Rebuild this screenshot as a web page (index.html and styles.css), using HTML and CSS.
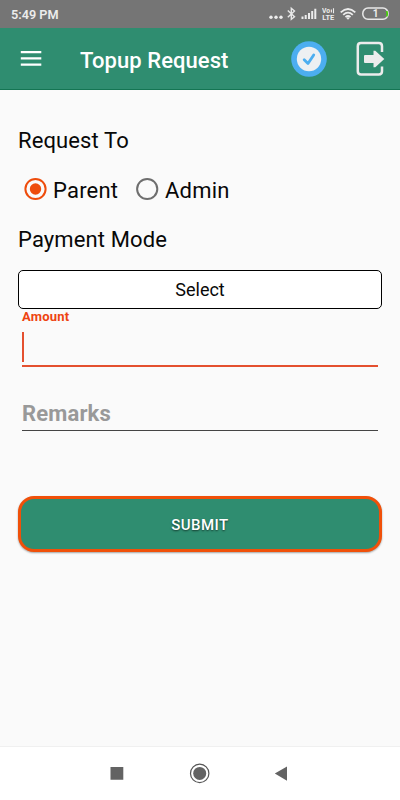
FILE: index.html
```html
<!DOCTYPE html>
<html lang="en">
<head>
<meta charset="utf-8">
<meta name="viewport" content="width=device-width, initial-scale=1">
<title>Topup Request</title>
<link rel="stylesheet" href="styles.css">
</head>
<body>
<div class="screen">
  <div class="status">
    <span class="time">5:49 PM</span>
    <svg class="dots" width="14" height="28" viewBox="0 0 14 28" fill="#ececec"><circle cx="2" cy="17.2" r="1.7"/><circle cx="7" cy="17.2" r="1.7"/><circle cx="12" cy="17.2" r="1.7"/></svg>
    <svg class="bt" width="9" height="28" viewBox="0 0 9 28" fill="none" stroke="#e8e8e8" stroke-width="1.4"><path d="M.8 10.5 7.5 16.8 4.3 19.4V8.2L7.5 11 .8 17.3"/></svg>
    <svg class="signal" width="16" height="28" viewBox="0 0 16 28" fill="#ececec"><path d="M.5 16.6h2V19H.5zM3.7 15h2v4h-2zM7 13h2v6H7zM10.2 11h2v8h-2zM13.3 8.8h2V19h-2z"/></svg>
    <svg class="volte" width="14" height="28" viewBox="0 0 14 28"><text x="0" y="13.2" textLength="8">Vo</text><path d="M9.4 9.5v3M11.5 8.2v5" fill="none" stroke="#ececec" stroke-width="1.1"/><text x="0.3" y="19.8" textLength="12" lengthAdjust="spacingAndGlyphs">LTE</text></svg>
    <svg class="wifi" width="16" height="28" viewBox="0 0 16 28" fill="none" stroke="#ececec" stroke-width="1.8"><path d="M.7 12.3Q8 5.600 15.300 12.300M3.200 14.800Q8 10.500 12.800 14.800M5.500 17.100Q8 15 10.500 17.100"/><path d="M6.300 17.900Q8 16.700 9.700 17.900L8 19.800z" fill="#ececec" stroke="none"/></svg>
    <svg class="battery" width="27" height="28" viewBox="0 0 27 28"><rect x=".8" y="8.1" width="25.3" height="11.2" rx="5.2" fill="none" stroke="#e8e8e8" stroke-width="1.5"/><path d="M24 11q1 2.800 0 5.600h1.600q1-2.800 0-5.600z" fill="#45d800"/><text x="13.5" y="17.3" text-anchor="middle">1</text></svg>
  </div>
  <header class="bar">
    <svg class="menu" width="22" height="18" viewBox="0 0 22 18" fill="#fff"><path d="M.8 1h20.500v2.200H.8zM.8 7.200h20.500v2.200H.8zM.8 13.500h20.500v2.200H.8z"/></svg>
    <h1>Topup Request</h1>
    <svg class="check" width="36" height="36" viewBox="0 0 36 36"><circle cx="18" cy="18" r="17.8" fill="#4caef0"/><circle cx="18" cy="18" r="12.2" fill="#edf0f2"/><path d="m13.200 18.700 3.800 3.800 5.700-8.600" fill="none" stroke="#4caef0" stroke-width="2.8" stroke-linecap="round" stroke-linejoin="round"/></svg>
    <svg class="exit" width="29" height="36" viewBox="0 0 29 36"><path d="M26 11V5.200Q26 2 22.800 2H5Q1.800 2 1.800 5.200V30.200Q1.800 33.400 5 33.400H22.800Q26 33.400 26 30.200V25.500" fill="none" stroke="#ececec" stroke-width="2.5"/><path d="M9 14h8.500V9.700h1.800l9 8.300-9 8.300h-1.800V22H9q-1 0-1-1v-6q0-1 1-1z" fill="#ececec"/></svg>
  </header>
  <main>
    <div class="label">Request To</div>
    <div class="radios">
      <svg width="24" height="24" viewBox="0 0 24 24"><circle cx="12.5" cy="12" r="10.1" fill="none" stroke="#ee4c0c" stroke-width="2"/><circle cx="12.5" cy="12" r="5.7" fill="#ee4c0c"/></svg>
      <span class="parent">Parent</span>
      <svg width="24" height="24" viewBox="0 0 24 24"><circle cx="12.2" cy="12" r="10.1" fill="none" stroke="#6e6e6e" stroke-width="2"/></svg>
      <span class="admin">Admin</span>
    </div>
    <div class="label mode">Payment Mode</div>
    <div class="select">Select</div>
    <div class="amount"><div class="float">Amount</div><div class="caret"></div></div>
    <div class="remarks">Remarks</div>
    <div class="submit">SUBMIT</div>
  </main>
  <nav class="nav">
    <svg width="240" height="53" viewBox="0 0 240 53" fill="#636363"><path d="M30.500 20h12.800v12.800H30.500zM207 19.400v14.400L194.800 26.600z"/><circle cx="119.700" cy="26.400" r="6.500"/><circle cx="119.700" cy="26.400" r="9.200" fill="none" stroke="#555" stroke-width="1.200"/></svg>
  </nav>
</div>
</body>
</html>
```
FILE: styles.css
```css
* { box-sizing: border-box; }
body { margin: 0; font-family: Roboto, sans-serif; background: #fafafa; }
svg { display: block; flex: none; }
.screen { width: 400px; height: 800px; display: flex; flex-direction: column; overflow: hidden; }
.status { height: 28px; background: #757575; display: flex; color: #ececec; padding-left: 11px; }
.time { width: 258px; font-size: 12.7px; font-weight: 600; line-height: 29px; }
.bt { margin-left: 4px; }
.signal { margin-left: 5px; }
.volte { margin-left: 5px; }
.volte text { font-size: 6.8px; font-weight: 700; fill: #ececec; }
.wifi { margin-left: 4px; }
.battery { margin-left: 6px; }
.battery text { font-size: 10px; font-weight: 700; fill: #ececec; }
.bar { height: 62px; background: #2f8d70; border-bottom: 1px solid #147553; display: flex; color: #fff; padding-left: 20px; }
.menu { margin-top: 22px; }
h1 { margin: 0 0 0 38px; width: 211px; font-size: 22px; letter-spacing: .07px; font-weight: 500; line-height: 65px; white-space: nowrap; }
.check { margin-top: 13px; }
.exit { margin: 13px 0 0 29px; }
main { flex: 1; padding: 37px 18px 0; color: #080808; }
.label { height: 28px; font-size: 22px; letter-spacing: .12px; line-height: 28px; }
.radios { display: flex; height: 28px; margin-top: 21px; padding-left: 5px; font-size: 22px; letter-spacing: .2px; line-height: 29px; }
.radios svg { margin-top: 1px; }
.parent { margin-left: 6px; width: 82px; }
.admin { margin-left: 6px; }
.mode { margin-top: 21px; line-height: 30px; }
.select { height: 39px; margin-top: 17px; border: 1px solid #000; border-radius: 5px; background: #fff; text-align: center; font-size: 18px; line-height: 38px; }
.amount { height: 58px; margin: 0 4px; border-bottom: 2px solid #e4502f; }
.float { height: 23px; font-size: 13px; letter-spacing: .2px; line-height: 16px; font-weight: 700; color: #ee4310; }
.caret { width: 2px; height: 30px; background: #e4502f; }
.remarks { height: 33px; margin: 31px 4px 0; border-bottom: 1px solid #444; font-size: 22px; letter-spacing: .15px; line-height: 32px; font-weight: 700; color: #999; }
.submit { height: 56px; margin-top: 65px; border: 3px solid #f05009; border-radius: 16px; background: #2f8d70; color: #fff; text-align: center; font-size: 15px; letter-spacing: .45px; font-weight: 500; line-height: 52px; box-shadow: 0 1px 2px rgba(0,0,0,.35); text-shadow: 0 1px 2px rgba(0,0,0,.6); }
.nav { height: 54px; background: #fff; border-top: 1px solid #f0f0f0; padding-left: 80px; }
```
